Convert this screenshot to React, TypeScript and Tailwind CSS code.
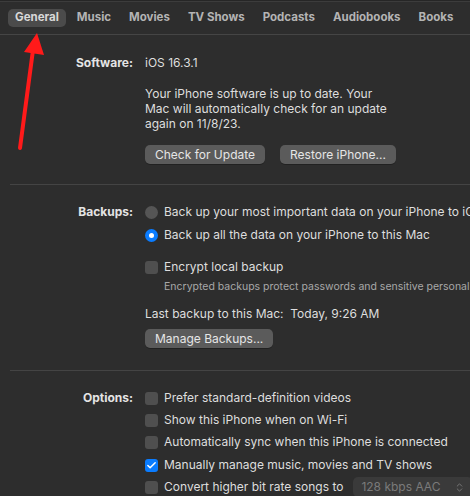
import { Check, ChevronsUpDown } from "lucide-react";

const tabs = ["General", "Music", "Movies", "TV Shows", "Podcasts", "Audiobooks", "Books"];

function Btn({ label }: { label: string }) {
  return (
    <div className="h-[19px] px-[10px] flex items-center rounded-[5px] bg-[#5b5b5b] text-[#e6e6e6] shadow-[0_1px_0_rgba(0,0,0,0.25)]">
      {label}
    </div>
  );
}

function Radio({ on }: { on?: boolean }) {
  return on ? (
    <span className="w-[13px] h-[13px] rounded-full bg-[#0a7cff] flex items-center justify-center shrink-0">
      <span className="w-[5px] h-[5px] rounded-full bg-white" />
    </span>
  ) : (
    <span className="w-[13px] h-[13px] rounded-full bg-[#555555] shrink-0" />
  );
}

function Box({ on }: { on?: boolean }) {
  return on ? (
    <span className="w-[13px] h-[13px] rounded-[3px] bg-[#0a7cff] flex items-center justify-center shrink-0">
      <Check size={11} strokeWidth={3.2} color="white" />
    </span>
  ) : (
    <span className="w-[13px] h-[13px] rounded-[3px] bg-[#4f4f4f] shrink-0" />
  );
}

function Row({ children, className = "" }: { children: React.ReactNode; className?: string }) {
  return <div className={`h-[22px] flex items-center gap-[6px] whitespace-nowrap ${className}`}>{children}</div>;
}

function Label({ text }: { text: string }) {
  return (
    <div className="w-[135px] shrink-0 pr-[12px] font-bold text-[#e4e4e4] h-[22px] flex items-center justify-end">
      {text}
    </div>
  );
}

export default function App() {
  return (
    <div
      className="relative w-[470px] h-[496px] overflow-hidden bg-[#2d2d2d] text-[#dedede] text-[12px]"
      style={{ fontFamily: "Inter, 'Liberation Sans', sans-serif" }}
    >
      {/* top edge */}
      <div className="h-[2px] bg-[#262626] border-b border-[#3c3c3c]" />

      {/* Tab bar */}
      <div className="h-[33px] flex items-center pl-[8px] gap-[4px] border-b border-[#454545] font-bold text-[11.5px] text-[#b4b4b4] whitespace-nowrap">
        {tabs.map((t, i) => (
          <div
            key={t}
            className={
              i === 0
                ? "h-[18px] px-[7px] flex items-center rounded-[5px] bg-[#4b4b4b] text-[#d8d8d8]"
                : "h-[18px] px-[7px] flex items-center"
            }
          >
            {t}
          </div>
        ))}
      </div>

      {/* Software */}
      <div className="ml-[10px] pt-[17px] pb-[20px] border-b border-[#444444]">
        <div className="flex">
          <Label text="Software:" />
          <div className="flex flex-col">
            <div className="h-[22px] flex items-center">iOS 16.3.1</div>
            <div className="mt-[12px] leading-[15px] w-[248px]">
              Your iPhone software is up to date. Your Mac will automatically check for an update again on 11/8/23.
            </div>
            <div className="mt-[14px] flex gap-[15px] whitespace-nowrap">
              <Btn label="Check for Update" />
              <Btn label="Restore iPhone..." />
            </div>
          </div>
        </div>
      </div>

      {/* Backups */}
      <div className="ml-[10px] pt-[16px] pb-[22px] border-b border-[#444444]">
        <div className="flex">
          <Label text="Backups:" />
          <div className="flex flex-col">
            <Row>
              <Radio />
              Back up your most important data on your iPhone to iCloud
            </Row>
            <Row className="mt-[1px]">
              <Radio on />
              Back up all the data on your iPhone to this Mac
            </Row>
            <Row className="mt-[10px]">
              <Box />
              Encrypt local backup
            </Row>
            <div className="mt-[1px] pl-[19px] text-[10.5px] text-[#a8a8a8] whitespace-nowrap h-[16px] flex items-center">
              Encrypted backups protect passwords and sensitive personal data.
            </div>
            <div className="mt-[8px] h-[22px] flex items-center whitespace-nowrap">
              Last backup to this Mac:&nbsp;&nbsp;Today, 9:26 AM
            </div>
            <div className="mt-[4px] flex">
              <Btn label="Manage Backups..." />
            </div>
          </div>
        </div>
      </div>

      {/* Options */}
      <div className="ml-[10px] pt-[16px]">
        <div className="flex">
          <Label text="Options:" />
          <div className="flex flex-col">
            <Row>
              <Box />
              Prefer standard-definition videos
            </Row>
            <Row>
              <Box />
              Show this iPhone when on Wi-Fi
            </Row>
            <Row>
              <Box />
              Automatically sync when this iPhone is connected
            </Row>
            <Row className="mt-[1px]">
              <Box on />
              Manually manage music, movies and TV shows
            </Row>
            <Row>
              <Box />
              Convert higher bit rate songs to
              <div className="ml-[4px] h-[20px] w-[120px] shrink-0 rounded-[5px] bg-[#3a3a3a] text-[#7a7a7a] flex items-center justify-between px-[8px]">
                128 kbps AAC
                <ChevronsUpDown size={11} color="#7a7a7a" />
              </div>
            </Row>
          </div>
        </div>
      </div>

      {/* Annotation arrow */}
      <svg className="absolute left-0 top-0 pointer-events-none" width="470" height="496">
        <line x1="20" y1="148" x2="33" y2="50" stroke="#ff1a1a" strokeWidth="4" strokeLinecap="round" />
        <polygon points="37,33 24,52 44,55" fill="#ff1a1a" />
      </svg>
    </div>
  );
}
